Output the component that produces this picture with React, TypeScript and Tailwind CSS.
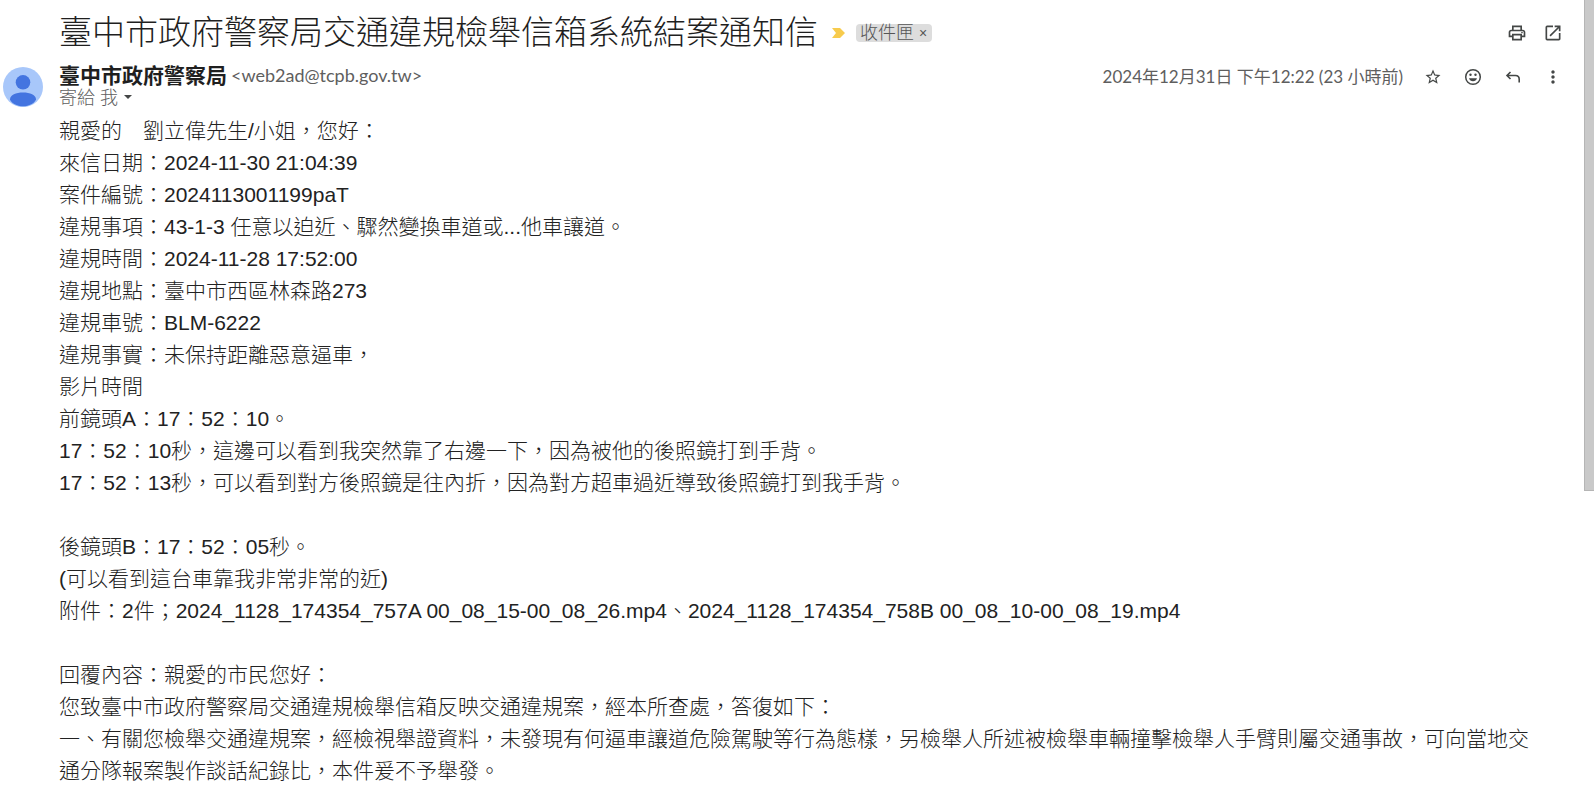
import { useState } from 'react';
import { MdMoreVert, MdOpenInNew, MdOutlinePrint, MdStarBorder } from 'react-icons/md';

const bodyLines = [
  '親愛的　劉立偉先生/小姐，您好：',
  '來信日期：2024-11-30 21:04:39',
  '案件編號：2024113001199paT',
  '違規事項：43-1-3 任意以迫近、驟然變換車道或...他車讓道。',
  '違規時間：2024-11-28 17:52:00',
  '違規地點：臺中市西區林森路273',
  '違規車號：BLM-6222',
  '違規事實：未保持距離惡意逼車，',
  '影片時間',
  '前鏡頭A：17：52：10。',
  '17：52：10秒，這邊可以看到我突然靠了右邊一下，因為被他的後照鏡打到手背。',
  '17：52：13秒，可以看到對方後照鏡是往內折，因為對方超車過近導致後照鏡打到我手背。',
  '',
  '後鏡頭B：17：52：05秒。',
  '(可以看到這台車靠我非常非常的近)',
  '附件：2件；2024_1128_174354_757A 00_08_15-00_08_26.mp4、2024_1128_174354_758B 00_08_10-00_08_19.mp4',
  '',
  '回覆內容：親愛的市民您好：',
  '您致臺中市政府警察局交通違規檢舉信箱反映交通違規案，經本所查處，答復如下：',
  '一、有關您檢舉交通違規案，經檢視舉證資料，未發現有何逼車讓道危險駕駛等行為態樣，另檢舉人所述被檢舉車輛撞擊檢舉人手臂則屬交通事故，可向當地交通分隊報案製作談話紀錄比，本件爰不予舉發。',
];

function Avatar() {
  return (
    <svg viewBox="0 0 40 40" className="size-10" aria-hidden="true">
      <circle cx="20" cy="20" r="20" fill="#a8c7fa" />
      <circle cx="20" cy="15.3" r="7.3" fill="#4374e0" />
      <path d="M7 32.500C7 28 13 25.600 20 25.600S33 28 33 32.500C32 36 26 39.300 20 39.300S8 36 7 32.500z" fill="#4374e0" />
    </svg>
  );
}

function EmojiIcon() {
  return (
    <svg viewBox="0 0 20 20" className="size-5" fill="none" stroke="currentColor" strokeWidth="1.5" aria-hidden="true">
      <circle cx="10" cy="10" r="7.3" />
      <path d="M6 11.200h8c-.5 1.900-2.100 3-4 3s-3.500-1.100-4-3z" fill="currentColor" stroke="none" />
      <circle cx="7.500" cy="7.800" r="1.200" fill="currentColor" stroke="none" />
      <circle cx="12.500" cy="7.800" r="1.200" fill="currentColor" stroke="none" />
    </svg>
  );
}

function ReplyIcon() {
  return (
    <svg viewBox="0 0 20 20" className="size-5" fill="none" stroke="currentColor" strokeWidth="1.600" aria-hidden="true">
      <path d="M7.500 5 4 8.500 7.500 12M4 8.500h8.500c2.200 0 3.700 1.500 3.700 3.700V15.500" />
    </svg>
  );
}

export default function App() {
  const [starred, setStarred] = useState(false);

  return (
    <div
      lang="zh-TW"
      className="flex min-h-screen items-start bg-white font-['Liberation_Sans','Noto_Sans_CJK_TC',sans-serif] font-light text-[#222]"
    >
      <main className="min-w-0 flex-1 pl-[3px]">
        {/* Subject */}
        <header className="flex items-center pt-[13px] pr-[21px] pl-14">
          <h1 className="text-[33px] leading-10 text-[#1f1f1f]">臺中市政府警察局交通違規檢舉信箱系統結案通知信</h1>
          <svg viewBox="0 0 13 10" className="ml-[14px] h-[10px] w-[13px]" aria-hidden="true">
            <path d="M0 0h8l5 5-5 5H0l4-5z" fill="#f7cb4d" />
          </svg>
          <span className="ml-[11px] flex h-[18px] items-center gap-1 rounded-sm bg-[#ddd] px-1 text-[18px] leading-[18px] text-[#555]">
            收件匣
            <button type="button" aria-label="移除標籤" className="w-[10px] text-sm">×</button>
          </span>
          <div className="ml-auto flex gap-4 text-[#444746]">
            <button type="button" aria-label="全部列印"><MdOutlinePrint size={20} /></button>
            <button type="button" aria-label="在新視窗開啟"><MdOpenInNew size={20} /></button>
          </div>
        </header>

        {/* Sender */}
        <section className="mt-[10px] flex items-start pr-[21px] font-['Lato','Noto_Sans_CJK_TC',sans-serif] text-[18px] text-[#5e5e5e]">
          <div className="mt-1 w-14 shrink-0">
            <Avatar />
          </div>
          <div>
            <p className="flex items-center gap-1 leading-6">
              <strong className="text-[21px] font-bold text-[#1f1f1f]">臺中市政府警察局</strong>
              <span className="font-normal">&lt;web2ad@tcpb.gov.tw&gt;</span>
            </p>
            <button type="button" className="flex items-center gap-[6px] leading-5">
              寄給 我
              <svg viewBox="0 0 8 4" className="h-1 w-2" aria-hidden="true">
                <path d="M0 0h8L4 4z" fill="#444746" />
              </svg>
            </button>
          </div>
          <div className="mt-[2px] ml-auto flex items-center gap-5 leading-6 text-[#444746]">
            <time dateTime="2024-12-31T12:22" className="text-[17px] font-normal text-[#5e5e5e]">
              2024年12月31日 下午12:22 (23 小時前)
            </time>
            <button
              type="button"
              aria-label="加星號"
              aria-pressed={starred}
              className="flex size-5 items-center justify-center"
              onClick={() => setStarred(!starred)}
            >
              <MdStarBorder size={18} />
            </button>
            <button type="button" aria-label="新增表情回應"><EmojiIcon /></button>
            <button type="button" aria-label="回覆"><ReplyIcon /></button>
            <button type="button" aria-label="更多"><MdMoreVert size={20} /></button>
          </div>
        </section>

        {/* Message */}
        <article className="mt-2 pr-12 pl-14 text-[21px] leading-8">
          {bodyLines.map((line, i) => (
            <p key={i} className="min-h-8 break-all">{line}</p>
          ))}
        </article>
      </main>

      {/* Scroll thumb */}
      <div className="h-[491px] w-[10px] shrink-0 border-b border-l border-[#b5b5b5] bg-[#c9c9c9]" />
    </div>
  );
}
